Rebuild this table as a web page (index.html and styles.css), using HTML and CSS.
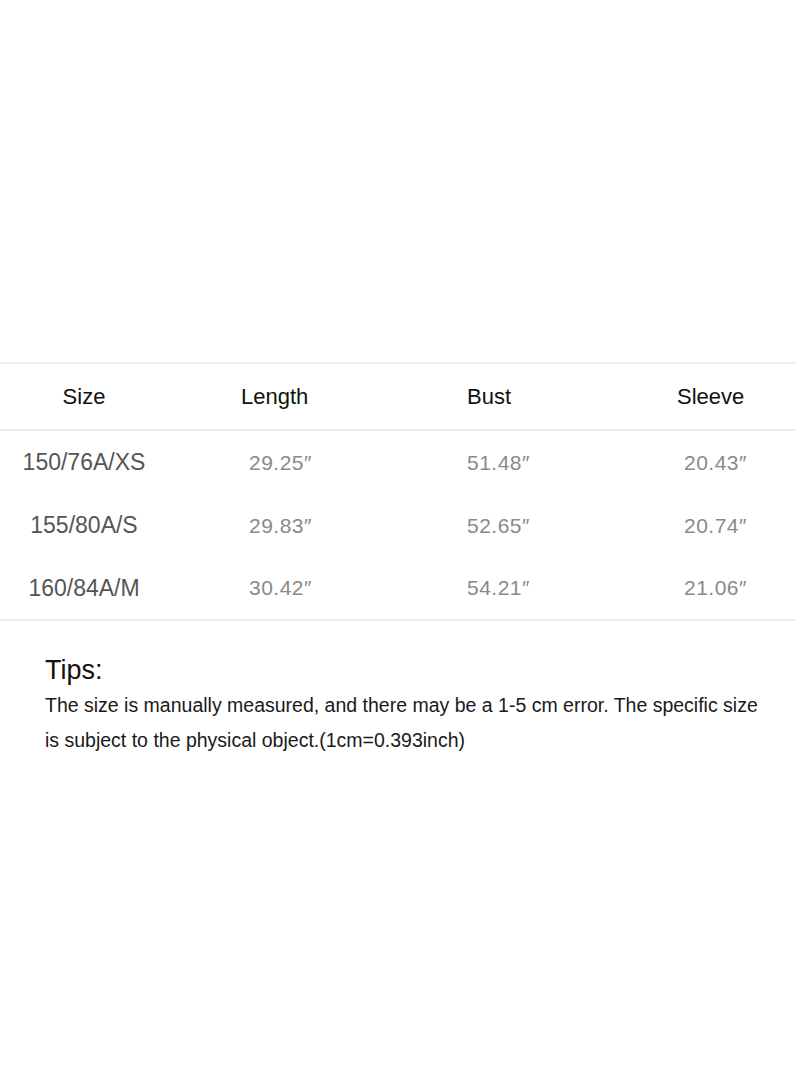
FILE: index.html
```html
<!DOCTYPE html>
<html lang="en">
<head>
<meta charset="utf-8">
<title>Size chart</title>
<link rel="stylesheet" href="styles.css">
</head>
<body>
<main class="page">
  <section class="chart">
    <div class="row head">
      <div class="cell c1">Size</div>
      <div class="cell c2">Length</div>
      <div class="cell c3">Bust</div>
      <div class="cell c4">Sleeve</div>
    </div>
    <div class="body">
      <div class="row data">
        <div class="cell c1">150/76A/XS</div>
        <div class="cell c2">29.25″</div>
        <div class="cell c3">51.48″</div>
        <div class="cell c4">20.43″</div>
      </div>
      <div class="row data">
        <div class="cell c1">155/80A/S</div>
        <div class="cell c2">29.83″</div>
        <div class="cell c3">52.65″</div>
        <div class="cell c4">20.74″</div>
      </div>
      <div class="row data last">
        <div class="cell c1">160/84A/M</div>
        <div class="cell c2">30.42″</div>
        <div class="cell c3">54.21″</div>
        <div class="cell c4">21.06″</div>
      </div>
    </div>
  </section>
  <section class="tips">
    <h2 class="tips-title">Tips:</h2>
    <p class="tips-text">The size is manually measured, and there may be a 1-5 cm error. The specific size is subject to the physical object.(1cm=0.393inch)</p>
  </section>
</main>
</body>
</html>
```
FILE: styles.css
```css
html, body {
  margin: 0;
  padding: 0;
  background: #ffffff;
}
.page {
  width: 800px;
  height: 1065px;
  padding-top: 362px;
  box-sizing: border-box;
  font-family: "Liberation Sans", Arial, sans-serif;
}
.chart {
  width: 796px;
  border-top: 2px solid #efefef;
  border-bottom: 2px solid #ececec;
}
.row {
  display: grid;
  grid-template-columns: 168px 218px 217px 1fr;
  align-items: center;
}
.head {
  height: 65px;
  border-bottom: 2px solid #ececec;
  font-size: 22px;
  color: #111111;
}
.data {
  height: 63px;
  font-size: 21px;
  color: #8a8a8a;
  letter-spacing: 0.5px;
}
.data.last { height: 62px; }
.head .c1 { text-align: center; }
.head .c2 { padding-left: 73px; }
.head .c3 { padding-left: 81px; }
.head .c4 { padding-left: 74px; }
.data .c1 {
  text-align: center;
  font-size: 23px;
  color: #555555;
  letter-spacing: 0;
}
.data .c2, .data .c3, .data .c4 { padding-left: 81px; }
.cell { white-space: nowrap; }
.tips {
  padding: 33px 0 0 45px;
}
.tips-title {
  margin: 0;
  font-size: 27px;
  font-weight: normal;
  line-height: 32px;
  color: #111111;
}
.tips-text {
  margin: 2px 0 0 0;
  width: 722px;
  font-size: 19.5px;
  line-height: 35px;
  color: #1a1a1a;
}
```
